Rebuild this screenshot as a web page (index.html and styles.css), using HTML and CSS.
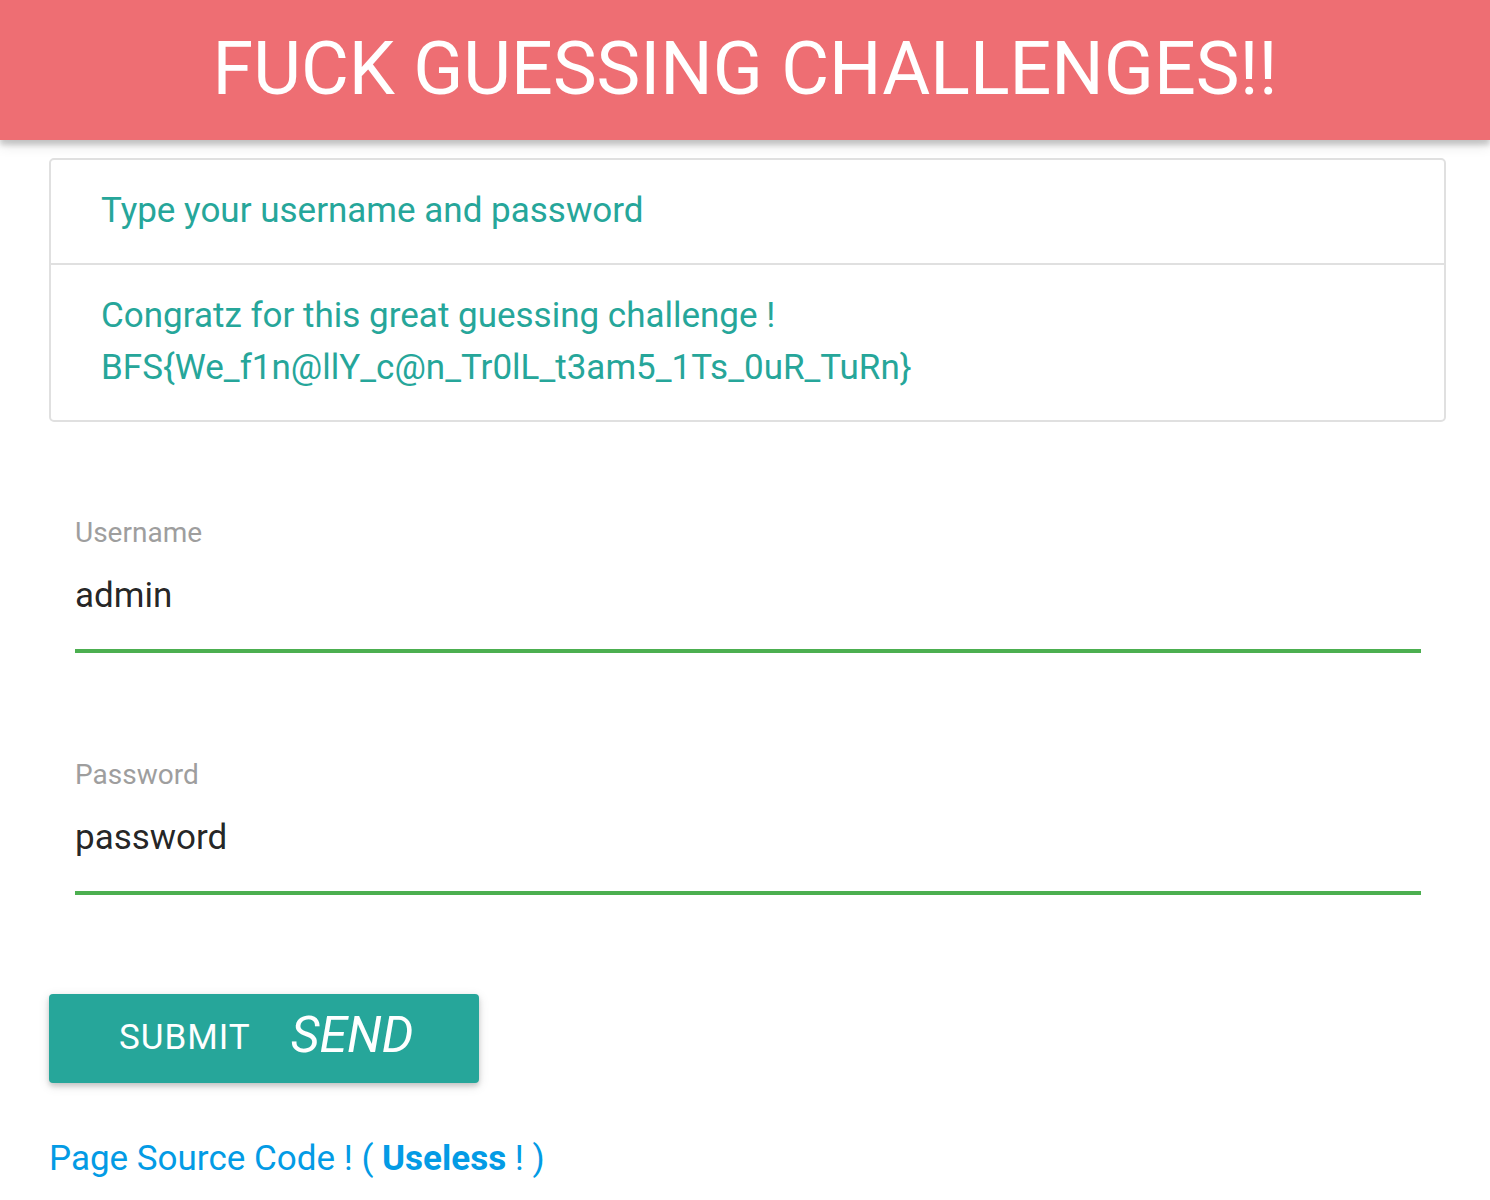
FILE: index.html
```html
<!DOCTYPE html>
<html lang="en">
<head>
<meta charset="utf-8">
<title>Fuck guessing challenges</title>
<link rel="stylesheet" href="styles.css">
</head>
<body>
<header class="topbar">
  <h1 class="title">FUCK GUESSING CHALLENGES!!</h1>
</header>
<main class="page">
  <ul class="collection">
    <li class="collection-item">Type your username and password</li>
    <li class="collection-item">Congratz for this great guessing challenge !<br>BFS{We_f1n@llY_c@n_Tr0lL_t3am5_1Ts_0uR_TuRn}</li>
  </ul>
  <form class="login">
    <div class="field first">
      <label class="label">Username</label>
      <div class="input">admin</div>
    </div>
    <div class="field">
      <label class="label">Password</label>
      <div class="input">password</div>
    </div>
  </form>
  <button class="btn" type="button"><span class="btn-text">SUBMIT</span><i class="btn-icon">SEND</i></button>
  <p class="source"><a class="source-link" href="#">Page Source Code ! ( <b>Useless</b> ! )</a></p>
</main>
</body>
</html>
```

FILE: styles.css
```css
* { box-sizing: border-box; }
html, body { margin: 0; padding: 0; }
body {
  font-family: Roboto, "Liberation Sans", sans-serif;
  background: #fff;
  color: rgba(0,0,0,0.87);
}
.topbar {
  height: 140px;
  background: #ee6e73;
  display: flex;
  align-items: center;
  justify-content: center;
  box-shadow: 0 5px 5px 0 rgba(0,0,0,0.16), 0 5px 13px 0 rgba(0,0,0,0.12);
  position: relative;
  z-index: 1;
}
.title {
  margin: 0;
  color: #fff;
  font-weight: 400;
  font-size: 73.6px;
  line-height: 1;
}
.page {
  padding: 18px 44px 0 49px;
}
.collection {
  list-style: none;
  margin: 0;
  padding: 0;
  border: 2px solid #e0e0e0;
  border-radius: 5px;
}
.collection-item {
  padding: 25px 50px 26px;
  font-size: 35px;
  line-height: 52px;
  color: #26a69a;
}
.collection-item + .collection-item {
  border-top: 2px solid #e0e0e0;
}
.login {
  padding: 0 25px 0 26px;
}
.field { padding-top: 106px; }
.field.first { padding-top: 95px; }
.label {
  display: block;
  font-size: 28px;
  line-height: 32px;
  color: #9e9e9e;
}
.input {
  margin-top: 26px;
  font-size: 35px;
  line-height: 42px;
  padding-bottom: 32px;
  border-bottom: 4px solid #4caf50;
  color: rgba(0,0,0,0.87);
}
.btn {
  display: block;
  margin-top: 99px;
  width: 430px;
  height: 89px;
  border: 0;
  border-radius: 4px;
  background: #26a69a;
  color: #fff;
  text-align: left;
  padding: 0 0 5px 70px;
  box-shadow: 0 3px 5px 0 rgba(0,0,0,0.16), 0 3px 12px 0 rgba(0,0,0,0.12);
  font-family: Roboto, "Liberation Sans", sans-serif;
  font-size: 35px;
  line-height: 40px;
}
.btn-text {
  letter-spacing: 1px;
}
.btn-icon {
  display: inline-block;
  margin-left: 40px;
  font-size: 50px;
  font-style: italic;
  line-height: 40px;
  vertical-align: -3px;
}
.source {
  margin: 56px 0 0;
  font-size: 35px;
  line-height: 40px;
}
.source-link {
  color: #039be5;
  text-decoration: none;
}
.source-link b { font-weight: 700; }
```
